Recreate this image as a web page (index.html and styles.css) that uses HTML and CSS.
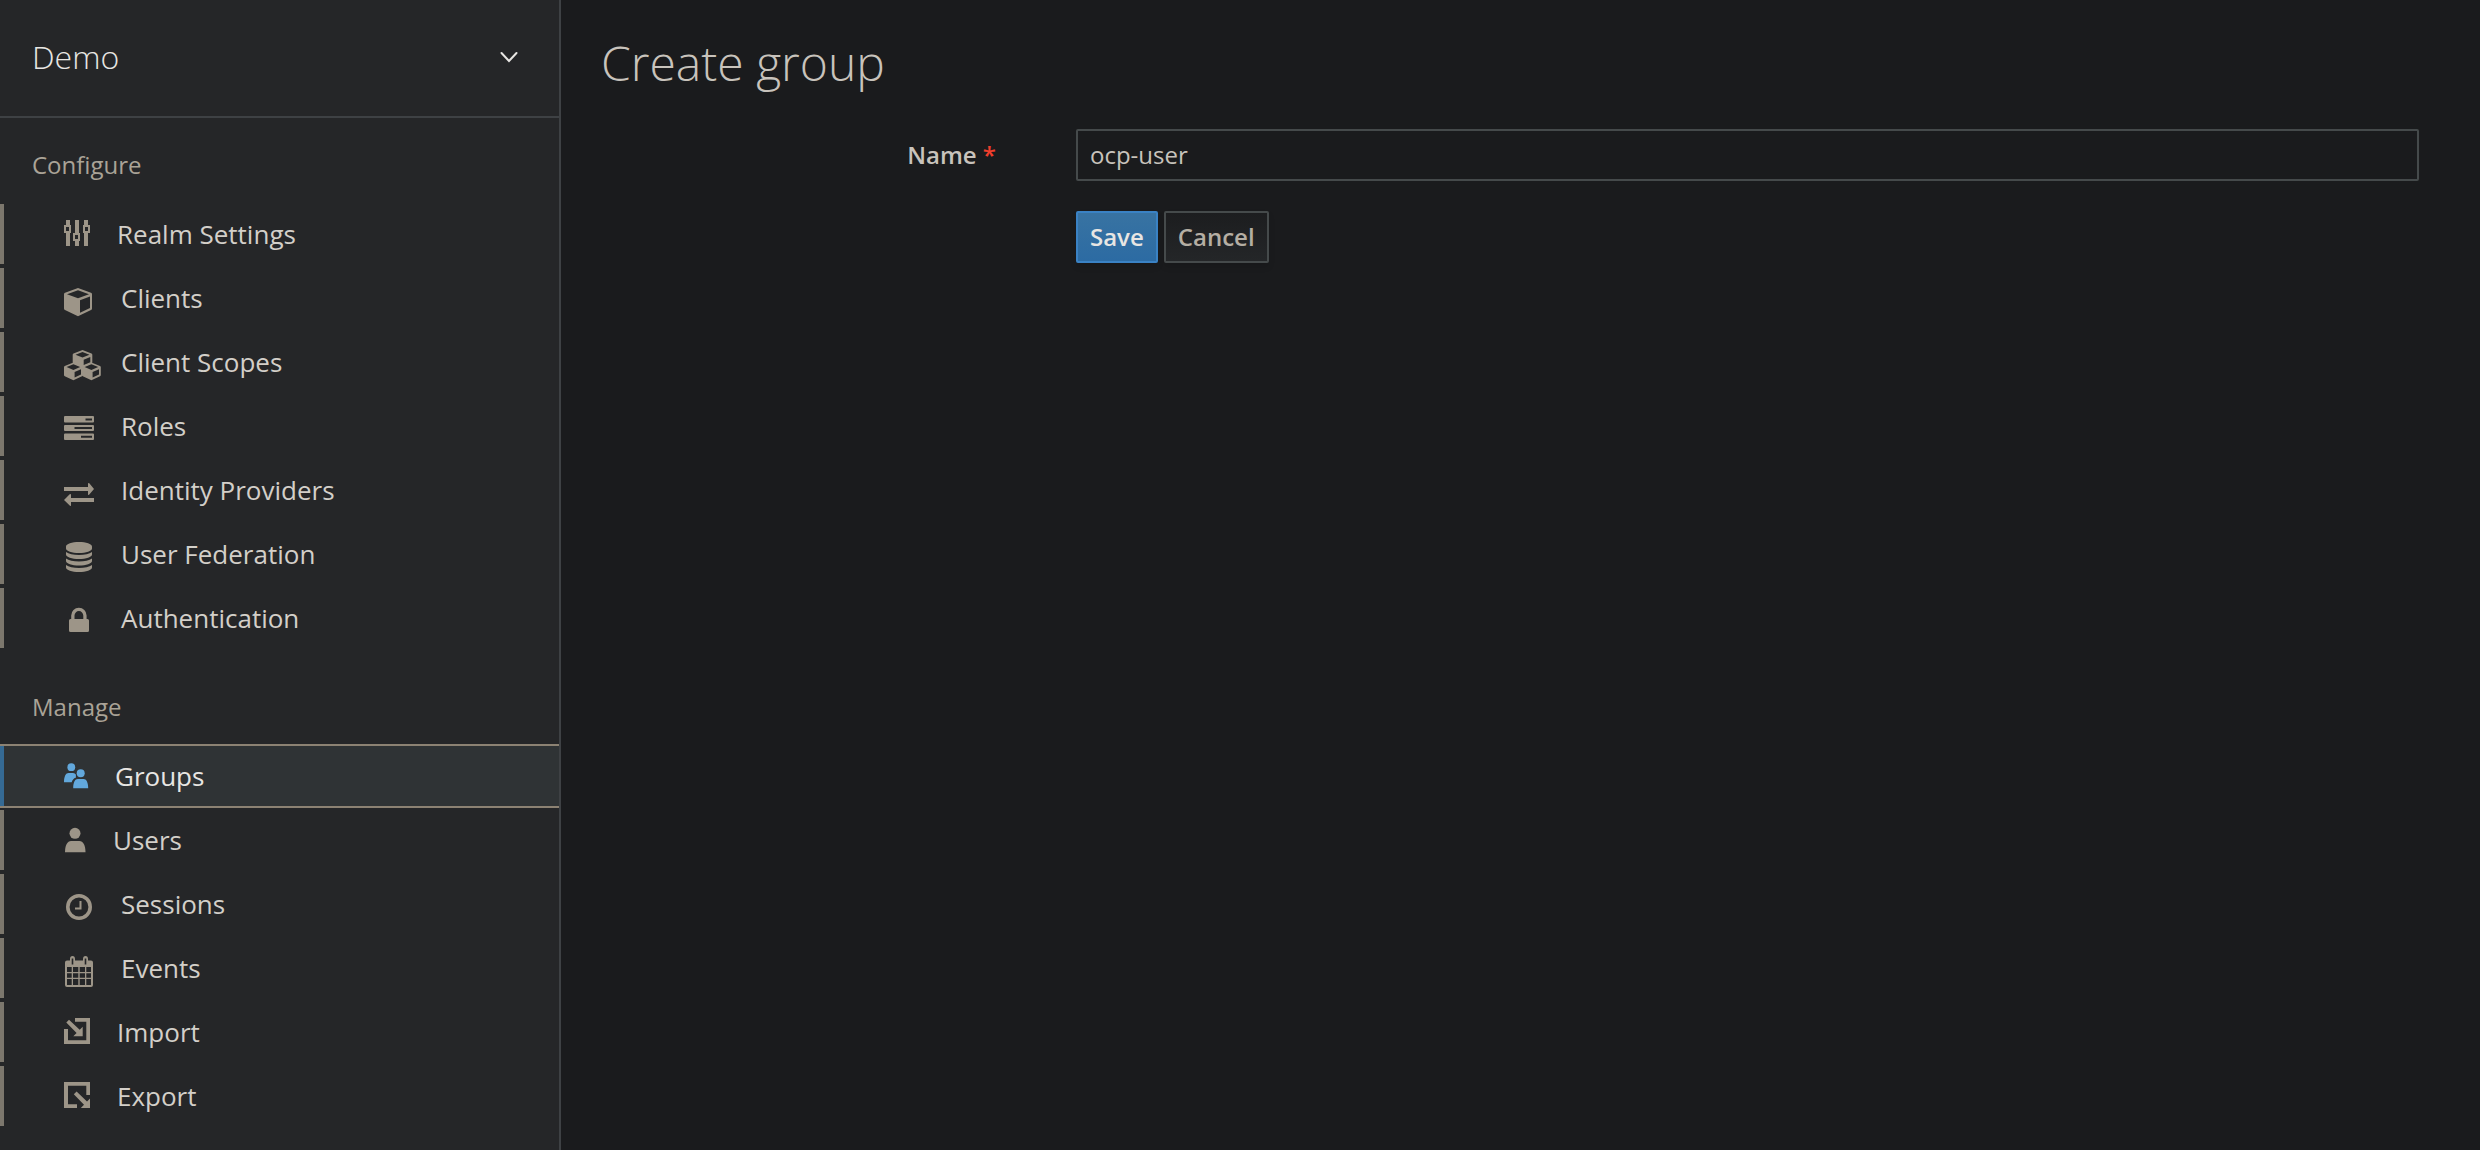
FILE: index.html
```html
<!DOCTYPE html>
<html lang="en">
<head>
<meta charset="utf-8">
<title>Create group</title>
<link rel="stylesheet" href="styles.css">
</head>
<body>
<div class="app">
  <aside class="sidebar">
    <button class="realm" type="button">
      <span>Demo</span>
      <svg class="chevron" width="20" height="12" viewBox="0 0 20 12" aria-hidden="true"><path d="M2.500 2l7.500 8 7.500-8"/></svg>
    </button>
    <nav>
      <h2 class="nav-title">Configure</h2>
      <ul class="nav-list">
        <li><a class="nav-link" href="#realm-settings">
          <svg class="icon" width="26" height="40" viewBox="0 0 26 40" aria-hidden="true"><path fill-rule="evenodd" d="M2 6h4v5h1v8H6v13H2V19H0v-8h2zM2 13v4h3v-4zM11 6h4v13h1v8h-1v5h-4v-5H9v-8h2zM11 21v4h3v-4zM20 6h4v5h2v8h-2v13h-4V19h-1v-8h1zM21 13v4h3v-4z"/></svg>
          Realm Settings</a></li>
        <li><a class="nav-link" href="#clients">
          <svg class="icon" width="30" height="40" viewBox="0 0 30 40" aria-hidden="true"><path fill-rule="evenodd" d="M14 10l13 4.700q1 .4 1 1.500v14.300q0 1-1 1.500l-13 6.200-13-6.200q-1-.5-1-1.500V16.200q0-1.100 1-1.500zM14 12.200L3 16.200l11 4 11-4zM16 22.300v12.500l10-4.800V18.600z"/></svg>
          Clients</a></li>
        <li><a class="nav-link" href="#client-scopes">
          <svg class="icon" width="30" height="40" viewBox="0 0 30 40" aria-hidden="true">
            <path fill-rule="evenodd" d="M18.500 8l9 3.600q.8.4.8 1.200v7.400q0 .8-.8 1.200l-9 4-9-4q-.8-.4-.8-1.200v-7.400q0-.8.8-1.200zM18.500 9.900l-7 2.800 7 2.800 7-2.800zM19.700 17.700v5.400l6.600-2.900v-5.200z"/>
            <path fill-rule="evenodd" d="M9.400 20.500l8.600 3.400q.8.4.8 1.200v7.900q0 .8-.8 1.200l-8.600 4-8.600-4Q0 33.800 0 33v-7.900q0-.8.8-1.200zM9.400 22.300l-6.800 2.800 6.800 2.800 6.800-2.800zM10.600 30v5.600l6.400-3v-5.300z"/>
            <path fill-rule="evenodd" d="M27.400 20.500l8.600 3.400q.8.4.8 1.200v7.900q0 .8-.8 1.200l-8.600 4-8.600-4q-.8-.4-.8-1.200v-7.900q0-.8.8-1.200zM27.400 22.300l-6.800 2.800 6.800 2.800 6.800-2.800zM28.600 30v5.600l6.400-3v-5.300z"/></svg>
          Client Scopes</a></li>
        <li><a class="nav-link" href="#roles">
          <svg class="icon" width="30" height="40" viewBox="0 0 30 40" aria-hidden="true"><path fill-rule="evenodd" d="M1 10h28q1 0 1 1v4.500q0 1-1 1H1q-1 0-1-1V11q0-1 1-1zM21.500 12.500v2H28v-2zM1 19h28q1 0 1 1v4q0 1-1 1H1q-1 0-1-1v-4q0-1 1-1zM10.500 21v2H28v-2zM1 27.500h28q1 0 1 1V33q0 1-1 1H1q-1 0-1-1v-4.500q0-1 1-1zM17 29.700v2h11v-2z"/></svg>
          Roles</a></li>
        <li><a class="nav-link" href="#identity-providers">
          <svg class="icon" width="30" height="40" viewBox="0 0 30 40" aria-hidden="true"><path d="M0 17h24v-3.500q.5-1 1.300-.2L30 19l-4.700 5.600q-.8.8-1.300-.2V21H0zM30 28H7v-3.500q-.5-1-1.300-.2L0 30l5.700 5.600q.8.800 1.300-.2V32h23z"/></svg>
          Identity Providers</a></li>
        <li><a class="nav-link" href="#user-federation">
          <svg class="icon" width="30" height="40" viewBox="0 0 30 40" aria-hidden="true"><path d="M2 12.500C2 10 8 8 15 8s13 2 13 4.500v2c0 2.500-6 4.500-13 4.500S2 17 2 14.500zM2 18c2.500 2 7.500 3 13 3s10.500-1 13-3v2.500c0 2.500-6 4.500-13 4.500S2 23 2 20.500zM2 24.500c2.500 2 7.500 3 13 3s10.500-1 13-3V27c0 2.500-6 4.500-13 4.500S2 29.500 2 27zM2 31c2.500 2 7.500 3 13 3s10.500-1 13-3v2.500c0 2.500-6 4.500-13 4.500S2 36 2 33.500z"/></svg>
          User Federation</a></li>
        <li><a class="nav-link" href="#authentication">
          <svg class="icon" width="30" height="40" viewBox="0 0 30 40" aria-hidden="true"><path d="M6.500 21h.7v-3.500a7.700 7.700 0 0 1 15.400 0V21h.9q1.500 0 1.500 1.500v10q0 1.500-1.500 1.500h-17Q5 34 5 32.500v-10Q5 21 6.500 21zM10.500 21h8.800v-3.500a4.400 4.400 0 0 0-8.800 0z"/></svg>
          Authentication</a></li>
      </ul>
      <h2 class="nav-title nav-title-manage">Manage</h2>
      <ul class="nav-list">
        <li><a class="nav-link active" href="#groups" aria-current="page">
          <svg class="icon" width="24" height="40" viewBox="0 0 24 40" aria-hidden="true"><circle cx="7.300" cy="11.200" r="3.900"/><circle cx="16.700" cy="17.300" r="4"/><path d="M0 26.200c0-6 2-9.200 4.500-9.200h4.500q2 0 3 1.800a6 6 0 0 0 0 2.700c-2.500 1-3.700 2.500-4.300 4.700zM9.200 32.200c0-6 2-9.200 4.500-9.200h6c2.500 0 4.500 3.200 4.500 9.200z"/></svg>
          Groups</a></li>
        <li><a class="nav-link" href="#users">
          <svg class="icon" width="22" height="40" viewBox="0 0 22 40" aria-hidden="true"><circle cx="11" cy="13.300" r="5.500"/><path d="M1 32.200C1 25 3.500 21 7 21h8.500c3.500 0 6 4 6 11.200z"/></svg>
          Users</a></li>
        <li><a class="nav-link" href="#sessions">
          <svg class="icon" width="30" height="40" viewBox="0 0 30 40" aria-hidden="true"><path class="stroke" stroke-width="3.600" d="M26.200 23a11.200 11.200 0 1 1-22.400 0a11.200 11.200 0 1 1 22.400 0z"/><path class="stroke" stroke-width="2" d="M16.500 17v7.500H11"/></svg>
          Sessions</a></li>
        <li><a class="nav-link" href="#events">
          <svg class="icon" width="30" height="40" viewBox="0 0 30 40" aria-hidden="true"><path fill-rule="evenodd" d="M3 12.500h3V11q0-3 2.500-3T11 11v1.500h8V11q0-3 2.500-3T24 11v1.500h3q2 0 2 2V37q0 2-2 2H3q-2 0-2-2V14.500q0-2 2-2zM7.700 10.500v6h1.600v-6zM20.700 10.500v6h1.600v-6zM3 19v5h4.700v-5zM9 19v5h5.300v-5zM15.700 19v5H21v-5zM22.300 19v5H27v-5zM3 25.200v4.600h4.700v-4.600zM9 25.200v4.600h5.300v-4.600zM15.700 25.200v4.600H21v-4.600zM22.300 25.200v4.600H27v-4.600zM3 31v6h4.700v-6zM9 31v6h5.300v-6zM15.700 31v6H21v-6zM22.300 31v6H27v-6z"/></svg>
          Events</a></li>
        <li><a class="nav-link" href="#import">
          <svg class="icon" width="26" height="40" viewBox="0 0 26 40" aria-hidden="true"><path d="M11 6h15v26H0V17h4v11.300h18.300V9.700H11zM5 7.800l10.700 10 3-3V24.300H9.300l3.300-3.300L2.300 10.500z"/></svg>
          Import</a></li>
        <li><a class="nav-link" href="#export">
          <svg class="icon" width="26" height="40" viewBox="0 0 26 40" aria-hidden="true"><path d="M26 19h-3.700V9.700H4v18.600h9V32H0V6h26zM12.600 15.500l10.400 10 3-3V32h-9.200l3.200-3.200L9.800 18.300z"/></svg>
          Export</a></li>
      </ul>
    </nav>
  </aside>
  <main class="content">
    <h1 class="page-title">Create group</h1>
    <form class="form">
      <label class="label" for="name">Name <span class="required">*</span></label>
      <input class="input" id="name" type="text" value="ocp-user" required>
      <div class="actions">
        <button class="button primary" type="submit">Save</button>
        <button class="button" type="button">Cancel</button>
      </div>
    </form>
  </main>
</div>
</body>
</html>
```
FILE: styles.css
```css
* {
  box-sizing: border-box;
}

body {
  margin: 0;
  background: #1a1b1d;
  color: #c8c3bc;
  font: 24px/32px "Open Sans", "Noto Sans", sans-serif;
}

.app {
  display: flex;
  min-height: 100vh;
}

.sidebar {
  flex: 0 0 561px;
  background: #252628;
  border-right: 2px solid #3e4144;
}

.realm {
  display: flex;
  align-items: center;
  justify-content: space-between;
  width: 100%;
  height: 118px;
  padding: 0 40px 2px 32px;
  border: 0;
  border-bottom: 2px solid #3e4144;
  background: none;
  color: #e8e6e3;
  font: 300 32px/44px "Open Sans", "Noto Sans", sans-serif;
}

.chevron {
  fill: none;
  stroke: currentColor;
  stroke-width: 2;
  stroke-linecap: round;
}

.nav-title {
  margin: 0;
  padding: 31px 32px 21px;
  color: #aaa397;
  font-size: 24px;
  font-weight: 400;
  line-height: 32px;
}

.nav-title-manage {
  padding-top: 41px;
}

.nav-list {
  margin: 0;
  padding: 0;
  list-style: none;
}

.nav-link {
  display: flex;
  align-items: center;
  gap: 27px;
  height: 64px;
  padding-left: 64px;
  border: solid transparent;
  border-width: 2px 0;
  background: linear-gradient(#7c776d, #7c776d) left / 4px 100% no-repeat;
  color: #d3cfc9;
  font-size: 26px;
  text-decoration: none;
}

.icon {
  flex: none;
  overflow: visible;
  fill: #9d9588;
}

.stroke {
  fill: none;
  stroke: #9d9588;
}

.active {
  border-color: #8c8273;
  background-color: #2f3335;
  background-image: linear-gradient(#356a94, #356a94);
  color: #e8e6e3;
}

.active .icon {
  fill: #62a8dc;
}

.content {
  flex: 1;
  min-width: 0;
  padding: 31px 61px 40px 40px;
}

.page-title {
  margin: 0 0 34px;
  font-size: 48px;
  font-weight: 300;
  line-height: 64px;
}

.form {
  display: grid;
  grid-template-columns: 5fr 17fr;
  gap: 30px 80px;
  align-items: center;
}

.label {
  font-weight: 600;
  text-align: right;
}

.required {
  color: #f03e2c;
}

.input {
  width: 100%;
  height: 52px;
  padding: 0 12px 2px;
  border: 2px solid #454a4b;
  border-radius: 2px;
  background: #1a1b1d;
  color: #c8c3bc;
  font: inherit;
}

.actions {
  display: flex;
  grid-column: 2;
  gap: 6px;
}

.button {
  height: 52px;
  padding: 0 12px;
  border: 2px solid #454a4b;
  border-radius: 2px;
  background: linear-gradient(#1c1d1f, #242628);
  box-shadow: 0 4px 6px rgba(0, 0, 0, 0.1);
  color: #b5aea3;
  font: 600 24px/32px "Open Sans", "Noto Sans", sans-serif;
}

.primary {
  border-color: #3a82c4;
  background: linear-gradient(#3873a2, #2c6ba3);
  color: #e8e6e3;
}
```
